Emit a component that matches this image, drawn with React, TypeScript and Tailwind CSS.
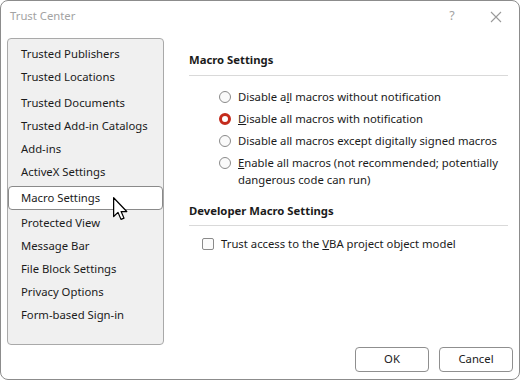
import React from 'react';

const font = { fontFamily: '"Segoe UI", "Noto Sans", Lato, sans-serif' };

const navItems: { label: string; gapBefore?: number }[] = [
  { label: 'Trusted Publishers' },
  { label: 'Trusted Locations' },
  { label: 'Trusted Documents', gapBefore: 3 },
  { label: 'Trusted Add-in Catalogs' },
  { label: 'Add-ins' },
  { label: 'ActiveX Settings' },
];

const navAfter = ['Protected View', 'Message Bar', 'File Block Settings', 'Privacy Options', 'Form-based Sign-in'];

function Radio({ checked }: { checked?: boolean }) {
  if (checked) {
    return <span className="box-border block w-[12px] h-[12px] rounded-full border-[3px] border-[#c42b1c] bg-white shrink-0" />;
  }
  return <span className="box-border block w-[12px] h-[12px] rounded-full border border-[#8a8a8a] bg-[#fafafa] shrink-0" />;
}

function Cursor() {
  return (
    <svg className="absolute left-[104px] top-[10px]" width="15" height="24" viewBox="0 0 12 19">
      <path
        d="M0.5 0.5 L0.5 15.5 L4 12.2 L6.4 17.8 L8.8 16.8 L6.5 11.5 L11 11.5 Z"
        fill="#fff"
        stroke="#000"
        strokeWidth="1"
        strokeLinejoin="round"
      />
    </svg>
  );
}

export default function App() {
  return (
    <div style={font} className="w-[520px] h-[380px] bg-white text-[11.3px] text-[#1b1b1b]">
      <div className="box-border w-full h-full border border-[#8c8c8c] rounded-[8px] flex flex-col overflow-hidden">
        <div className="h-[31px] flex items-center pl-[9px] text-[#a3a3a3] shrink-0">
          <span className="flex-1">Trust Center</span>
          <span className="w-[20px] text-center mr-[28px] text-[12.5px]">?</span>
          <svg className="mr-[17px]" width="12" height="12" viewBox="0 0 12 12">
            <path d="M1 1 L11 11 M11 1 L1 11" stroke="#9a9a9a" strokeWidth="1.1" />
          </svg>
        </div>
        <div className="flex-1 flex pl-[6px] pt-[6px] pb-[7px]">
          <div className="box-border w-[157px] h-[307px] bg-[#f0f0f0] border border-[#a9a9a9] rounded-[4px] pt-[3px] shrink-0">
            {navItems.map((it) => (
              <div
                key={it.label}
                className="h-[23px] leading-[23px] pl-[13px] whitespace-nowrap"
                style={it.gapBefore ? { marginTop: it.gapBefore } : undefined}
              >
                {it.label}
              </div>
            ))}
            <div className="relative box-border mt-[3px] mb-[1px] h-[24px] leading-[22px] pl-[12px] bg-white border border-[#8a8a8a] rounded-[4px]">
              Macro Settings
              <Cursor />
            </div>
            {navAfter.map((l) => (
              <div key={l} className="h-[23px] leading-[23px] pl-[13px] whitespace-nowrap">
                {l}
              </div>
            ))}
          </div>
          <div className="flex-1 flex flex-col pl-[25px] pr-[6px]">
            <div className="pr-[5px]">
              <div className="pt-[14px] pb-[7px] leading-[16px] font-bold border-b border-[#d9d9d9]">Macro Settings</div>
              <div className="mt-[10px] pl-[30px]">
                <div className="h-[22px] flex items-center gap-[7px]">
                  <Radio />
                  <span className="whitespace-nowrap">
                    Disable a<u>l</u>l macros without notification
                  </span>
                </div>
                <div className="h-[22px] flex items-center gap-[7px]">
                  <Radio checked />
                  <span className="whitespace-nowrap">
                    <u>D</u>isable all macros with notification
                  </span>
                </div>
                <div className="h-[22px] flex items-center gap-[7px]">
                  <Radio />
                  <span className="whitespace-nowrap">Disable all macros except digitally signed macros</span>
                </div>
                <div className="flex gap-[7px] pt-[2px]">
                  <div className="h-[17px] flex items-center">
                    <Radio />
                  </div>
                  <span className="leading-[17px] w-[262px]">
                    <u>E</u>nable all macros (not recommended; potentially dangerous code can run)
                  </span>
                </div>
              </div>
              <div className="mt-[15px] pb-[6px] leading-[16px] font-bold border-b border-[#d9d9d9]">
                Developer Macro Settings
              </div>
              <div className="mt-[7px] h-[22px] flex items-center gap-[7px] pl-[13px]">
                <span className="box-border block w-[12px] h-[12px] rounded-[2px] border border-[#8a8a8a] bg-[#fbfbfb] shrink-0" />
                <span>
                  Trust access to the <u>V</u>BA project object model
                </span>
              </div>
            </div>
            <div className="mt-auto flex justify-end gap-[10px]">
              <button className="box-border w-[74px] h-[25px] border border-[#8f8f8f] rounded-[4px] bg-white">OK</button>
              <button className="box-border w-[74px] h-[25px] border border-[#8f8f8f] rounded-[4px] bg-white">Cancel</button>
            </div>
          </div>
        </div>
      </div>
    </div>
  );
}
